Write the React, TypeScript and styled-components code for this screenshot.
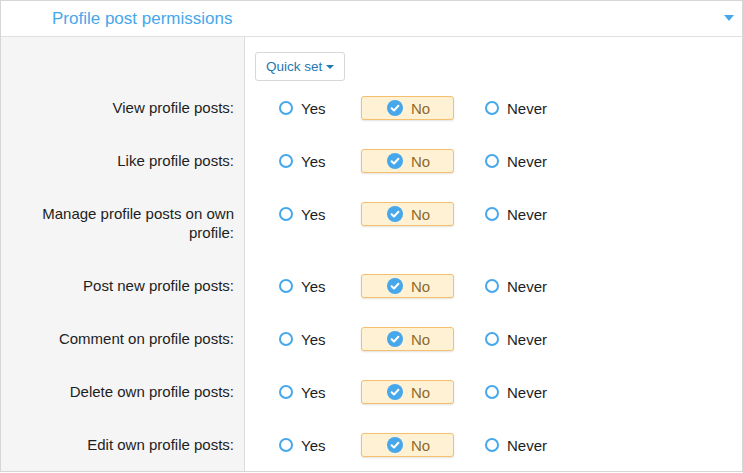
import React from 'react';
import styled, { createGlobalStyle } from 'styled-components';

const GlobalStyle = createGlobalStyle`
  html, body {
    margin: 0;
    padding: 0;
    background: #fff;
  }
  body {
    font-family: "Liberation Sans", Arial, sans-serif;
  }
`;

const Panel = styled.section`
  width: 743px;
  box-sizing: border-box;
  border: 1px solid #d6d6d6;
  background: #fff;
`;

const Header = styled.header`
  display: flex;
  align-items: center;
  justify-content: space-between;
  height: 35px;
  padding: 0 8px 0 51px;
  border-bottom: 1px solid #e0e0e0;
`;

const Title = styled.h3`
  margin: 0;
  font-size: 17px;
  font-weight: normal;
  color: #47a7eb;
`;

const Toggle = styled.span`
  width: 0;
  height: 0;
  border-left: 5px solid transparent;
  border-right: 5px solid transparent;
  border-top: 6px solid #47a7eb;
  margin-top: -2px;
`;

const Body = styled.div`
  display: grid;
  grid-template-columns: 244px 1fr;
`;

const LabelCell = styled.div`
  background: #f5f5f5;
  border-right: 1px solid #dcdcdc;
  padding: 17px 10px 17px 20px;
  text-align: right;
  font-size: 15px;
  line-height: 19px;
  color: #1d1d1d;
`;

const ControlCell = styled.div<{ $top?: boolean }>`
  padding: ${(p) => (p.$top ? '15px 0 0 10px' : '15px 0 14px 34px')};
`;

const QuickSet = styled.button`
  display: inline-flex;
  align-items: center;
  gap: 4px;
  height: 29px;
  padding: 0 10px;
  border: 1px solid #d8d8d8;
  border-radius: 3px;
  background: #fff;
  font-family: inherit;
  font-size: 13.5px;
  color: #2577b1;
`;

const Caret = styled.span`
  width: 0;
  height: 0;
  border-left: 4px solid transparent;
  border-right: 4px solid transparent;
  border-top: 4px solid #2577b1;
`;

const Choices = styled.div`
  display: grid;
  grid-template-columns: 82px 124px auto;
  align-items: center;
  height: 24px;
`;

const Choice = styled.label<{ $checked?: boolean }>`
  display: inline-flex;
  align-items: center;
  gap: 8px;
  height: 24px;
  box-sizing: border-box;
  font-size: 15px;
  color: ${(p) => (p.$checked ? '#8b6a2e' : '#1d1d1d')};
  ${(p) =>
    p.$checked &&
    `
    width: 93px;
    padding-left: 25px;
    background: #fff2d4;
    border: 1px solid #f4c06d;
    border-radius: 3px;
    box-shadow: 0 1px 2px rgba(0, 0, 0, 0.12);
  `}
`;

const Ring = styled.span`
  width: 14px;
  height: 14px;
  box-sizing: border-box;
  border: 2px solid #47a7eb;
  border-radius: 50%;
  background: #fff;
`;

const Check = () => (
  <svg width="16" height="16" viewBox="0 0 16 16">
    <circle cx="8" cy="8" r="8" fill="#47a7eb" />
    <path d="M4.6 8.2 L7 10.5 L11.4 5.8" fill="none" stroke="#fff" strokeWidth="2" strokeLinecap="round" strokeLinejoin="round" />
  </svg>
);

const permissions = [
  'View profile posts:',
  'Like profile posts:',
  'Manage profile posts on own profile:',
  'Post new profile posts:',
  'Comment on profile posts:',
  'Delete own profile posts:',
  'Edit own profile posts:',
];

const PermissionRow = ({ label }: { label: string }) => (
  <>
    <LabelCell>{label}</LabelCell>
    <ControlCell>
      <Choices>
        <Choice>
          <Ring />
          Yes
        </Choice>
        <Choice $checked>
          <Check />
          No
        </Choice>
        <Choice>
          <Ring />
          Never
        </Choice>
      </Choices>
    </ControlCell>
  </>
);

const App = () => (
  <>
    <GlobalStyle />
    <Panel>
      <Header>
        <Title>Profile post permissions</Title>
        <Toggle />
      </Header>
      <Body>
        <LabelCell />
        <ControlCell $top>
          <QuickSet>
            Quick set <Caret />
          </QuickSet>
        </ControlCell>
        {permissions.map((p) => (
          <PermissionRow key={p} label={p} />
        ))}
      </Body>
    </Panel>
  </>
);

export default App;
